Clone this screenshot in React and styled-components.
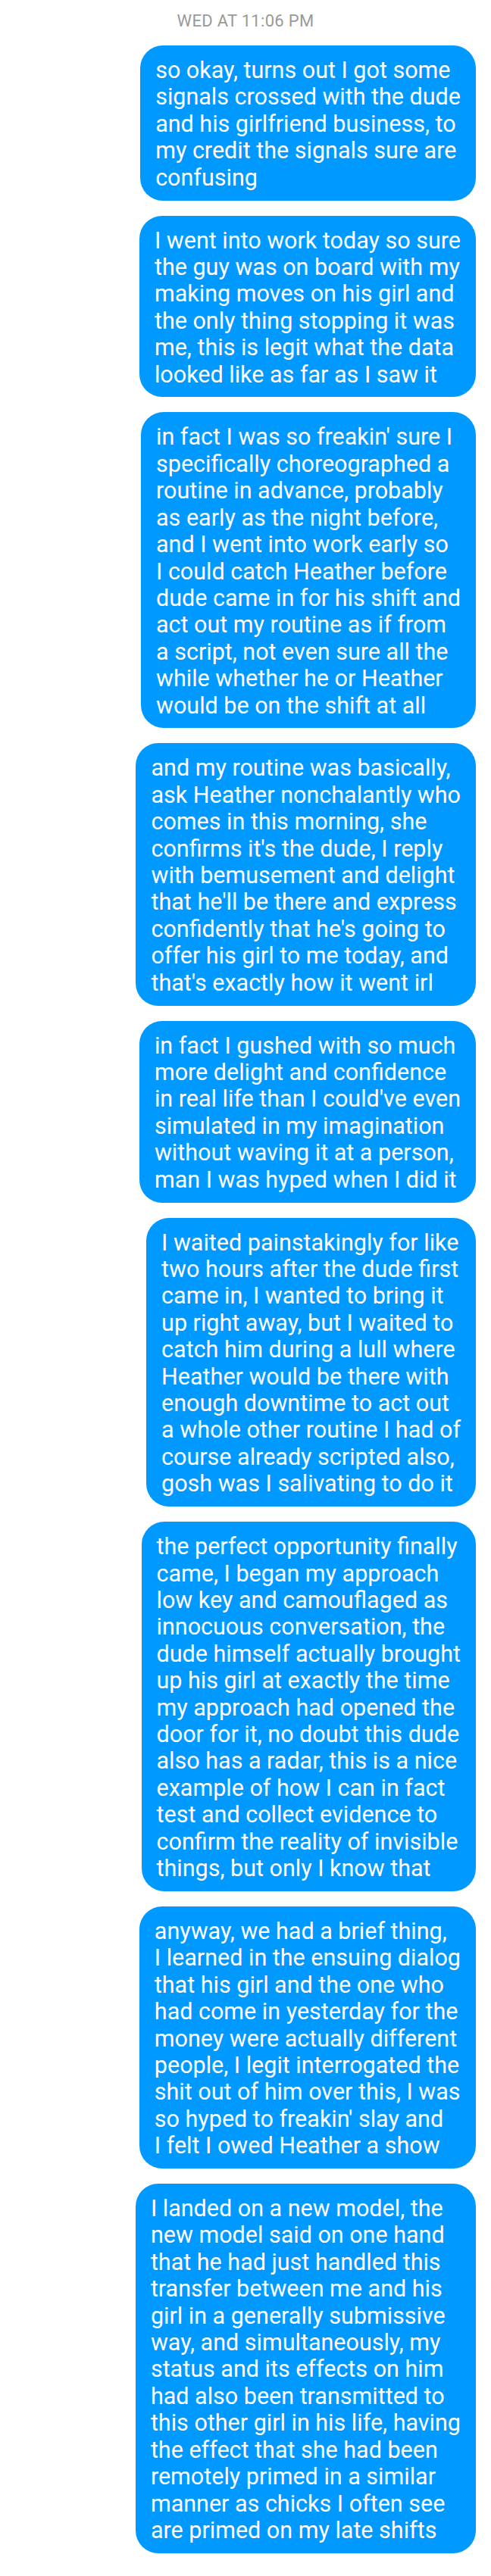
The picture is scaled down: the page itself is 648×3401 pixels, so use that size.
import React from "react";
import styled, { createGlobalStyle } from "styled-components";

const GlobalStyle = createGlobalStyle`
  html, body {
    margin: 0;
    padding: 0;
    background: #ffffff;
  }
  body {
    font-family: Roboto, "Noto Sans", "Liberation Sans", sans-serif;
  }
`;

const Thread = styled.div`
  display: flex;
  flex-direction: column;
  align-items: flex-end;
  gap: 20px;
  width: 648px;
  box-sizing: border-box;
  padding: 15px 20px 28px 20px;
`;

const Stamp = styled.div`
  align-self: center;
  font-size: 22px;
  line-height: 26px;
  color: #9a9a9a;
  letter-spacing: 0.3px;
  margin-bottom: -1px;
`;

const Bubble = styled.div`
  background: #0099ff;
  color: #ffffff;
  border-radius: 30px;
  padding: 15px 20px 12.5px 20px;
  font-size: 30.5px;
  line-height: 35.4px;
  white-space: pre;
`;

const messages = [
  `so okay, turns out I got some
signals crossed with the dude
and his girlfriend business, to
my credit the signals sure are
confusing`,
  `I went into work today so sure
the guy was on board with my
making moves on his girl and
the only thing stopping it was
me, this is legit what the data
looked like as far as I saw it`,
  `in fact I was so freakin' sure I
specifically choreographed a
routine in advance, probably
as early as the night before,
and I went into work early so
I could catch Heather before
dude came in for his shift and
act out my routine as if from
a script, not even sure all the
while whether he or Heather
would be on the shift at all`,
  `and my routine was basically,
ask Heather nonchalantly who
comes in this morning, she
confirms it's the dude, I reply
with bemusement and delight
that he'll be there and express
confidently that he's going to
offer his girl to me today, and
that's exactly how it went irl`,
  `in fact I gushed with so much
more delight and confidence
in real life than I could've even
simulated in my imagination
without waving it at a person,
man I was hyped when I did it`,
  `I waited painstakingly for like
two hours after the dude first
came in, I wanted to bring it
up right away, but I waited to
catch him during a lull where
Heather would be there with
enough downtime to act out
a whole other routine I had of
course already scripted also,
gosh was I salivating to do it`,
  `the perfect opportunity finally
came, I began my approach
low key and camouflaged as
innocuous conversation, the
dude himself actually brought
up his girl at exactly the time
my approach had opened the
door for it, no doubt this dude
also has a radar, this is a nice
example of how I can in fact
test and collect evidence to
confirm the reality of invisible
things, but only I know that`,
  `anyway, we had a brief thing,
I learned in the ensuing dialog
that his girl and the one who
had come in yesterday for the
money were actually different
people, I legit interrogated the
shit out of him over this, I was
so hyped to freakin' slay and
I felt I owed Heather a show`,
  `I landed on a new model, the
new model said on one hand
that he had just handled this
transfer between me and his
girl in a generally submissive
way, and simultaneously, my
status and its effects on him
had also been transmitted to
this other girl in his life, having
the effect that she had been
remotely primed in a similar
manner as chicks I often see
are primed on my late shifts`,
];

export default function App() {
  return (
    <>
      <GlobalStyle />
      <Thread>
        <Stamp>WED AT 11:06 PM</Stamp>
        {messages.map((text, i) => (
          <Bubble key={i}>{text}</Bubble>
        ))}
      </Thread>
    </>
  );
}
